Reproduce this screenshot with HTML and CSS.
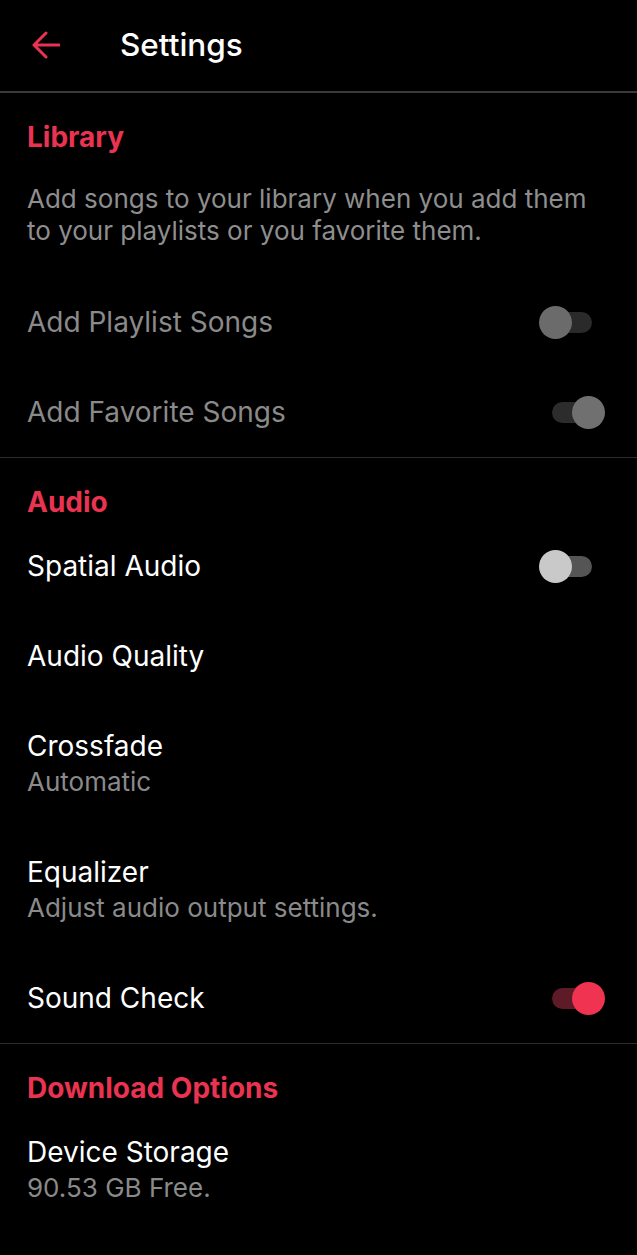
FILE: index.html
```html
<!DOCTYPE html>
<html lang="en">
<head>
<meta charset="utf-8">
<title>Settings</title>
<link rel="stylesheet" href="styles.css">
</head>
<body>
<div class="screen">
  <header class="topbar">
    <svg class="back" width="28" height="28" viewBox="0 0 28 28" aria-hidden="true">
      <path d="M2 14 H27 M14 2 L2 14 L14 26" fill="none" stroke="#ea3350" stroke-width="3" stroke-linecap="round" stroke-linejoin="round"/>
    </svg>
    <h1 class="title">Settings</h1>
  </header>

  <section class="section">
    <h2 class="section-head">Library</h2>
    <p class="desc">Add songs to your library when you add them to your playlists or you favorite them.</p>
    <div class="row">
      <div class="label disabled">Add Playlist Songs</div>
      <div class="switch disabled-off"><span class="track"></span><span class="knob"></span></div>
    </div>
    <div class="row">
      <div class="label disabled">Add Favorite Songs</div>
      <div class="switch disabled-on on"><span class="track"></span><span class="knob"></span></div>
    </div>
  </section>

  <section class="section">
    <h2 class="section-head">Audio</h2>
    <div class="row">
      <div class="label">Spatial Audio</div>
      <div class="switch off"><span class="track"></span><span class="knob"></span></div>
    </div>
    <div class="row">
      <div class="label">Audio Quality</div>
    </div>
    <div class="row">
      <div class="text">
        <div class="label">Crossfade</div>
        <div class="sub">Automatic</div>
      </div>
    </div>
    <div class="row">
      <div class="text">
        <div class="label">Equalizer</div>
        <div class="sub">Adjust audio output settings.</div>
      </div>
    </div>
    <div class="row">
      <div class="label">Sound Check</div>
      <div class="switch red on"><span class="track"></span><span class="knob"></span></div>
    </div>
  </section>

  <section class="section last">
    <h2 class="section-head">Download Options</h2>
    <div class="row">
      <div class="text">
        <div class="label">Device Storage</div>
        <div class="sub">90.53 GB Free.</div>
      </div>
    </div>
  </section>
</div>
</body>
</html>
```

FILE: styles.css
```css
* { box-sizing: border-box; }
html, body {
  margin: 0;
  padding: 0;
  background: #000;
}
body {
  font-family: Inter, "Noto Sans", "Liberation Sans", sans-serif;
  color: #fff;
  -webkit-font-smoothing: antialiased;
}
.screen {
  width: 637px;
  min-height: 1255px;
  background: #000;
}
.topbar {
  height: 93px;
  display: flex;
  align-items: center;
  padding: 0 0 2px 32px;
  border-bottom: 2px solid #3a3a3a;
}
.back {
  display: block;
  flex: none;
}
.title {
  margin: 0 0 0 60px;
  font-size: 31.5px;
  font-weight: 500;
  line-height: 36px;
}
.section {
  border-bottom: 1px solid #2c2c2c;
}
.section.last {
  border-bottom: none;
}
.section-head {
  margin: 0;
  padding: 26px 27px 1px;
  font-size: 28px;
  line-height: 36px;
  font-weight: 700;
  color: #ea3350;
}
.desc {
  margin: 0;
  padding: 27px 40px 30px 27px;
  font-size: 26px;
  line-height: 32px;
  color: #8e8e8e;
}
.row {
  display: flex;
  align-items: center;
  justify-content: space-between;
  padding: 27px 32px 27px 27px;
}
.label {
  font-size: 28px;
  line-height: 36px;
  color: #fff;
}
.label.disabled {
  color: #8a8a8a;
}
.sub {
  font-size: 26px;
  line-height: 36px;
  color: #8a8a8a;
}
.switch {
  position: relative;
  width: 66px;
  height: 33px;
  flex: none;
}
.track {
  position: absolute;
  left: 13px;
  top: 6px;
  width: 40px;
  height: 21px;
  border-radius: 11px;
  background: #2a2a2a;
}
.knob {
  position: absolute;
  top: 0;
  left: 0;
  width: 33px;
  height: 33px;
  border-radius: 50%;
  background: #6b6b6b;
}
.switch.on .knob {
  left: auto;
  right: 0;
}
.switch.off .track { background: #555; }
.switch.off .knob { background: #c9c9c9; }
.switch.disabled-on .track { background: #2c2c2c; }
.switch.disabled-on .knob { background: #707070; }
.switch.red .track { background: #5c1b26; }
.switch.red .knob { background: #f03350; }
```
